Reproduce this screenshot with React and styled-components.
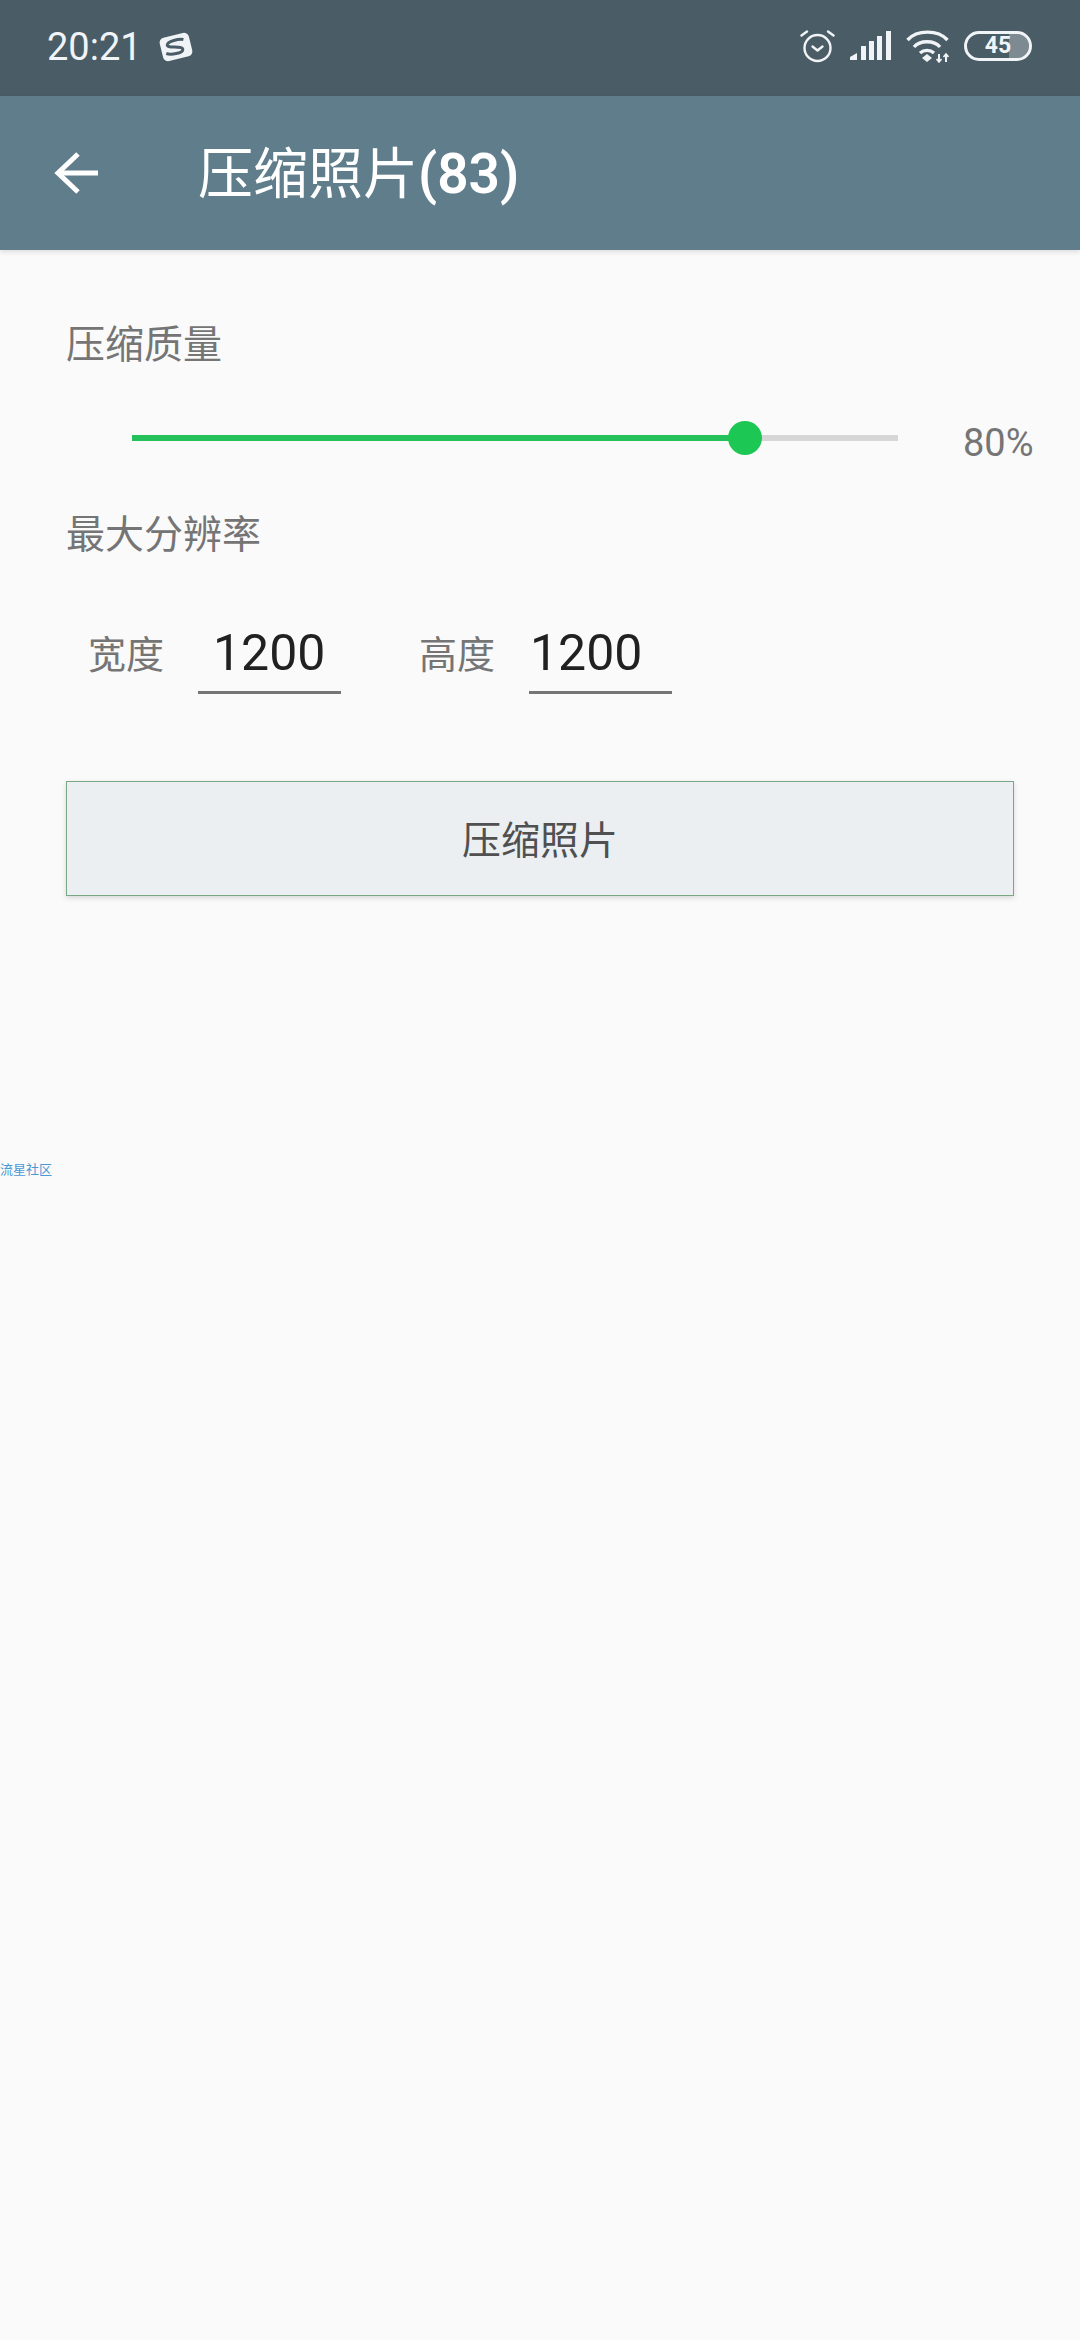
import React from 'react';
import styled, { createGlobalStyle } from 'styled-components';

const Global = createGlobalStyle`
    html, body {
        margin: 0;
        padding: 0;
        background: #fafafa;
    }
    * {
        box-sizing: border-box;
    }
`;

const Page = styled.div`
    width: 1080px;
    height: 2340px;
    overflow: hidden;
    background: #fafafa;
    font-family: Roboto, "Noto Sans CJK SC", sans-serif;
`;

const StatusBar = styled.div`
    height: 96px;
    background: #4a5c66;
    display: flex;
    align-items: center;
    padding: 0 47px 2px;
    color: #f0f4f7;
`;

const Clock = styled.span`
    font-size: 38px;
    line-height: 1;
    margin-right: 16px;
`;

const StatusIcons = styled.div`
    margin-left: auto;
    margin-right: 1px;
    margin-bottom: 2px;
    display: flex;
    align-items: center;
    gap: 15px;
`;

const AppBar = styled.div`
    height: 154px;
    background: #607d8b;
    display: flex;
    align-items: center;
    padding-left: 54px;
    color: #fff;
    box-shadow: 0 2px 5px rgba(0, 0, 0, 0.12);
    position: relative;
`;

const Title = styled.h1`
    margin: 3px 0 0 100px;
    font-size: 55px;
    font-weight: 400;
    line-height: 1;
    display: flex;
    align-items: center;

    b {
        font-weight: 600;
    }
`;

const Content = styled.div`
    padding: 70px 66px 0;
`;

const Label = styled.div`
    font-size: 39px;
    line-height: 50px;
    color: #757575;
`;

const SliderRow = styled.div`
    display: flex;
    align-items: center;
    height: 76px;
    margin: 30px 0 34px;
    padding-left: 66px;
`;

const Track = styled.div`
    flex: none;
    width: 766px;
    height: 6px;
    background: #d6d6d6;
    position: relative;
`;

const Fill = styled.div`
    height: 100%;
    background: #24c05a;
`;

const Thumb = styled.div`
    position: absolute;
    top: -14px;
    width: 34px;
    height: 34px;
    margin-left: -17px;
    border-radius: 50%;
    background: #1cc853;
`;

const Percent = styled.span`
    flex: none;
    font-size: 38px;
    line-height: 1;
    color: #757575;
    margin-left: 65px;
    position: relative;
    top: 5px;
`;

const SizeRow = styled.div`
    display: flex;
    align-items: flex-end;
    margin-top: 65px;
    padding-left: 22px;
`;

const SizeField = styled.div`
    display: flex;
    align-items: flex-end;
    margin-right: 78px;
`;

const SizeLabel = styled.span`
    font-size: 38px;
    line-height: 50px;
    color: #757575;
    width: 110px;
    margin-bottom: 14px;
`;

const SizeValue = styled.div`
    width: 143px;
    height: 69px;
    padding-left: ${(p) => p.$inset}px;
    font-size: 50px;
    line-height: 56px;
    color: #212121;
    border-bottom: 3px solid #757575;
`;

const Button = styled.button`
    display: block;
    width: 948px;
    height: 115px;
    margin-top: 87px;
    padding: 0 0 3px;
    background: #ebeff2;
    border: 1px solid #7aa884;
    box-shadow: 0 2px 5px rgba(0, 0, 0, 0.14);
    font-family: inherit;
    font-size: 39px;
    color: #505050;
`;

const Watermark = styled.div`
    margin-top: 266px;
    font-size: 13px;
    line-height: 16px;
    color: #4a98d4;
`;

const Alarm = () => (
    <svg width="35" height="34" viewBox="0 0 35 34" fill="none" stroke="#f0f4f7" strokeWidth="2.4" strokeLinecap="round" strokeLinejoin="round">
        <circle cx="17.5" cy="19" r="13" />
        <path d="M12.5 17.5 17.5 21.5l5-4" />
        <path d="M1.5 6.5 7 2.5M33.5 6.5 28 2.5" />
    </svg>
);

const Signal = () => (
    <svg width="41" height="30" viewBox="0 0 41 30" fill="#f0f4f7">
        <path d="M0 29v-3l7-4v7z" />
        <rect x="11" y="15" width="5" height="14" />
        <rect x="19" y="10" width="5" height="19" />
        <rect x="27" y="5" width="5" height="24" />
        <rect x="36" y="0" width="5" height="29" />
    </svg>
);

const Wifi = () => (
    <svg width="43" height="33" viewBox="0 0 43 33" fill="none" stroke="#f0f4f7" strokeWidth="3.4">
        <path d="M1.5 10C11-0.5 32-0.5 41.5 10" />
        <path d="M8 17C14 10 28 10 34 17" />
        <path d="M14 23c4-3.5 10-3.5 14 0" />
        <path d="M21 24l-5 4 5 4 5-4z" fill="#f0f4f7" stroke="none" />
        <path d="M33 24v8M40 24v8" strokeWidth="2" />
        <path d="M30.5 29l2.5 3 2.5-3M37.5 27l2.5-3 2.5 3" strokeWidth="1.6" />
    </svg>
);

const Battery = styled.div`
    width: 68px;
    height: 30px;
    border: 3px solid #f0f4f7;
    border-radius: 15px;
    background: linear-gradient(to right, transparent 68%, #7d8a92 68%);
    background-clip: padding-box;
    font-size: 23px;
    font-weight: 700;
    line-height: 24px;
    text-align: center;
    color: #f0f4f7;
`;

const SogouLogo = () => (
    <svg width="36" height="34" viewBox="0 0 36 34">
        <g transform="rotate(-14 18 17)">
            <rect x="3" y="5" width="30" height="24" rx="5" fill="#f0f4f7" />
            <path d="M27 11.5c-4-2-16-2-17 1.500s15 4 14 8-13 2.500-17 0" fill="none" stroke="#4a5c66" strokeWidth="3" />
        </g>
    </svg>
);

const BackArrow = () => (
    <svg width="44" height="44" viewBox="0 0 44 44" fill="none" stroke="#fff" strokeWidth="5">
        <path d="M44 22H5" />
        <path d="M24 3 4 22l20 19" />
    </svg>
);

export default function App() {
    const quality = 80;

    return (
        <Page>
            <Global />
            <StatusBar>
                <Clock>20:21</Clock>
                <SogouLogo />
                <StatusIcons>
                    <Alarm />
                    <Signal />
                    <Wifi />
                    <Battery>45</Battery>
                </StatusIcons>
            </StatusBar>
            <AppBar>
                <BackArrow />
                <Title>压缩照片<b>(83)</b></Title>
            </AppBar>
            <Content>
                <Label>压缩质量</Label>
                <SliderRow>
                    <Track>
                        <Fill style={{ width: `${quality}%` }} />
                        <Thumb style={{ left: `${quality}%` }} />
                    </Track>
                    <Percent>{quality}%</Percent>
                </SliderRow>
                <Label>最大分辨率</Label>
                <SizeRow>
                    <SizeField>
                        <SizeLabel>宽度</SizeLabel>
                        <SizeValue $inset={15}>1200</SizeValue>
                    </SizeField>
                    <SizeField>
                        <SizeLabel>高度</SizeLabel>
                        <SizeValue $inset={1}>1200</SizeValue>
                    </SizeField>
                </SizeRow>
                <Button>压缩照片</Button>
            </Content>
            <Watermark>流星社区</Watermark>
        </Page>
    );
}
